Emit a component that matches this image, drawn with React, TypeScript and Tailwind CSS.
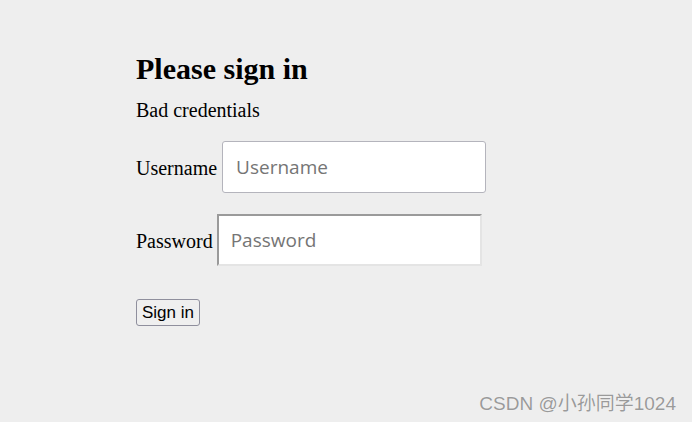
import React from 'react';

const App: React.FC = () => {
    return (
        <div className="relative w-[692px] h-[422px] bg-[#eeeeee] overflow-hidden" style={{ fontFamily: '"Liberation Serif", serif' }}>
            <form className="pl-[136px] pt-[52px] text-black" onSubmit={e => e.preventDefault()}>
                <h2 className="text-[30px] font-bold leading-[34px]">Please sign in</h2>
                <p className="mt-[13px] text-[20px] leading-[23px]">Bad credentials</p>

                <div className="mt-[19px] flex items-baseline gap-[5px]">
                    <label htmlFor="username" className="text-[20px] leading-[23px] translate-y-[1px]">Username</label>
                    <input
                        id="username"
                        type="text"
                        placeholder="Username"
                        className="w-[264px] h-[52px] bg-white border border-[#b4b4bc] rounded-[3px] px-[13px] text-[19px] font-['Open_Sans',sans-serif] placeholder-[#757575] outline-none"
                    />
                </div>

                <div className="mt-[21px] flex items-baseline gap-[4px]">
                    <label htmlFor="password" className="text-[20px] leading-[23px] translate-y-[1px]">Password</label>
                    <input
                        id="password"
                        type="password"
                        placeholder="Password"
                        className="w-[265px] h-[52px] bg-white border-2 border-t-[#9a9a9a] border-l-[#9a9a9a] border-r-[#e4e4e4] border-b-[#e4e4e4] px-[12px] text-[19px] font-['Open_Sans',sans-serif] placeholder-[#757575] outline-none"
                    />
                </div>

                <button
                    type="submit"
                    className="mt-[33px] block w-[64px] h-[27px] bg-[#efefef] border border-[#8f8f9d] rounded-[3px] text-[17px] leading-none font-['Liberation_Sans',Arial,sans-serif] text-black"
                >
                    Sign in
                </button>
            </form>

            <div className="absolute right-[16px] bottom-[7px] text-[19px] leading-[22px] text-[#9a9a9a] font-['Liberation_Sans','Noto_Sans_CJK_SC',sans-serif] [text-shadow:0_0_1px_#ffffff]">
                CSDN @小孙同学1024
            </div>
        </div>
    );
};

export default App;
